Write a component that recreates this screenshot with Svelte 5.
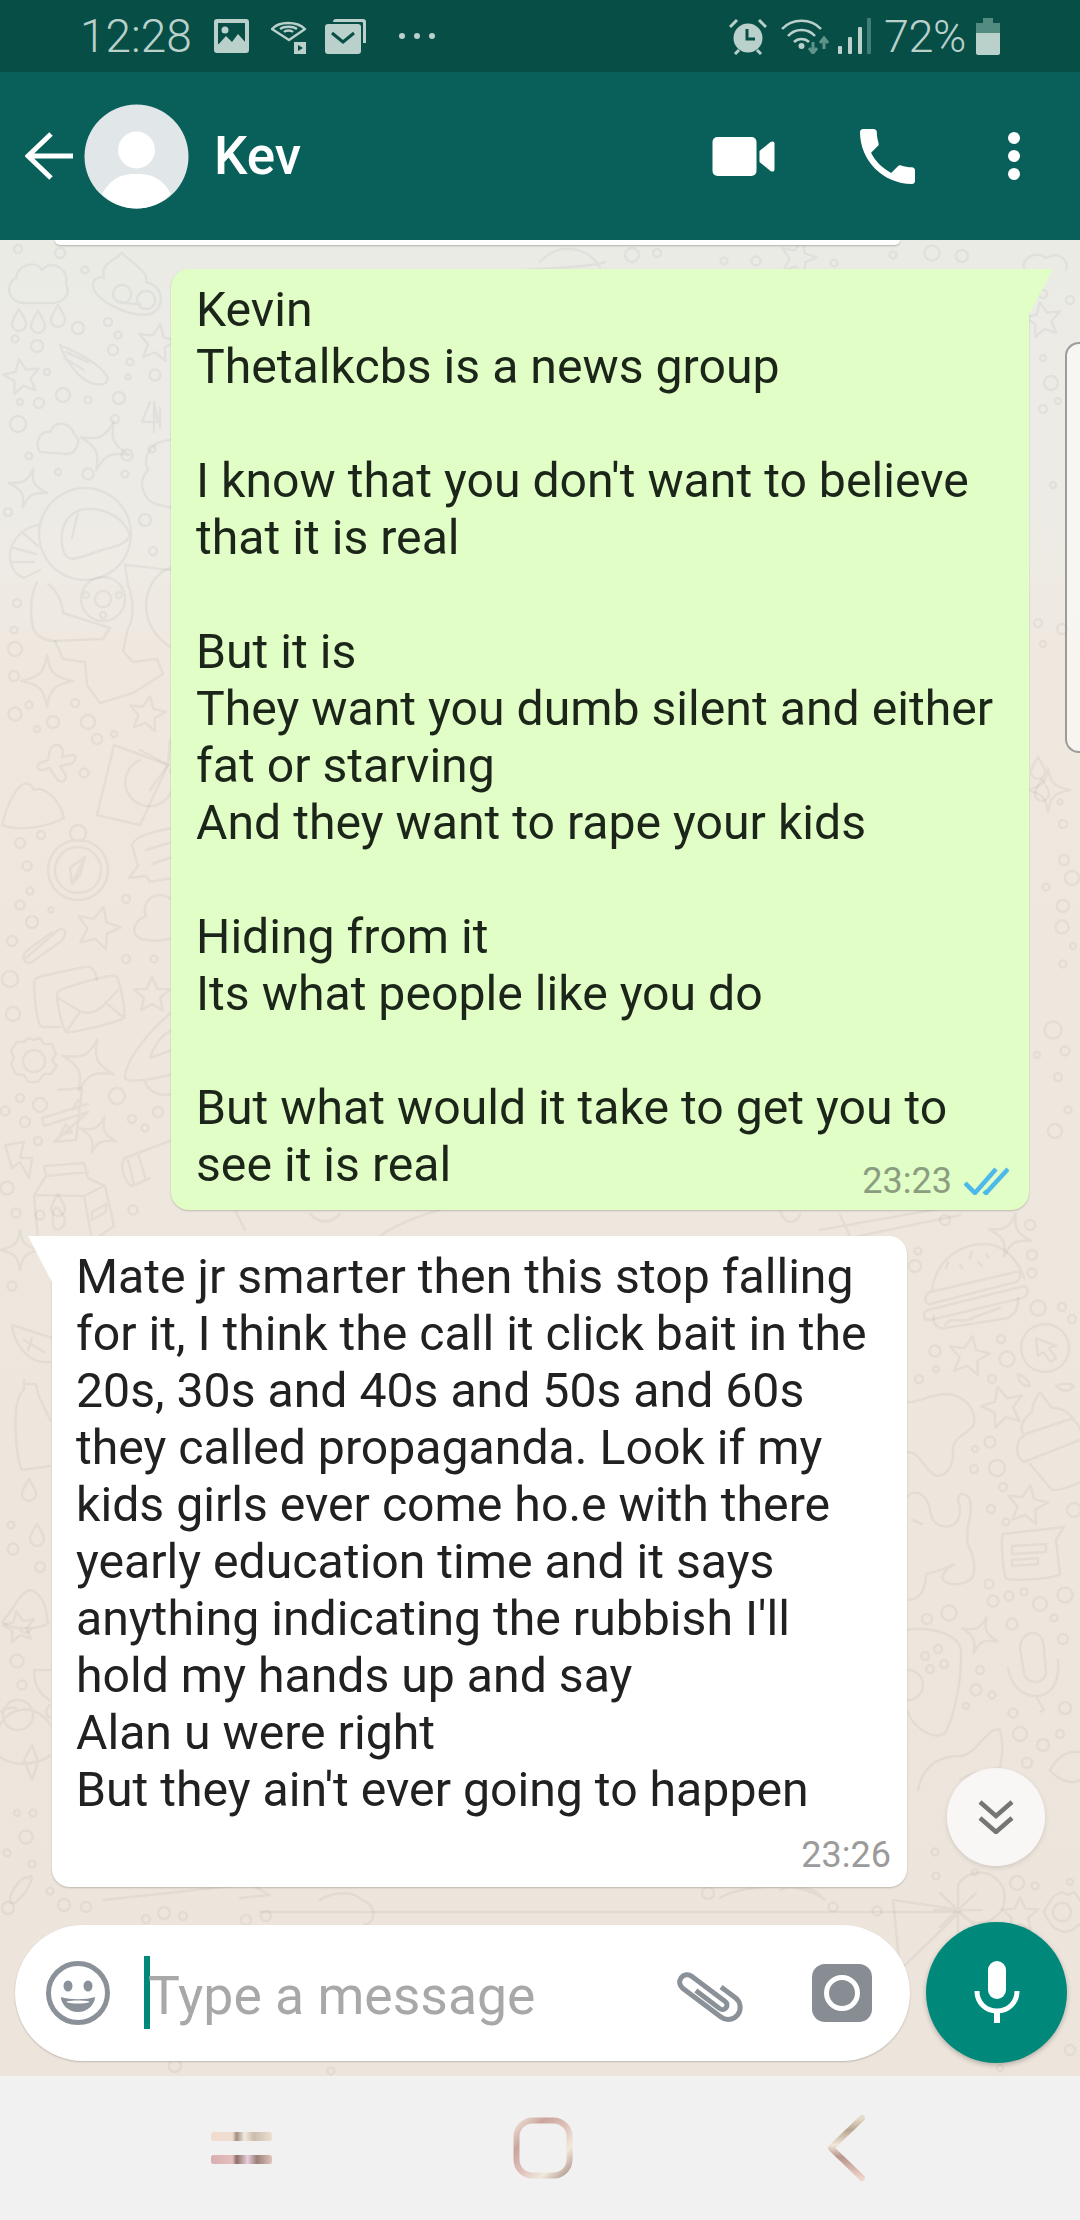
<script>
  const sent = `Kevin
Thetalkcbs is a news group

I know that you don't want to believe
that it is real

But it is
They want you dumb silent and either
fat or starving
And they want to rape your kids

Hiding from it
Its what people like you do

But what would it take to get you to
see it is real`;

  const received = `Mate jr smarter then this stop falling
for it, I think the call it click bait in the
20s, 30s and 40s and 50s and 60s
they called propaganda. Look if my
kids girls ever come ho.e with there
yearly education time and it says
anything indicating the rubbish I'll
hold my hands up and say
Alan u were right
But they ain't ever going to happen`;

  // wallpaper doodles, in page coordinates
  const dots = [
    [20,843,5],[41,835,4],[27,866,4.5],[30,891,3.5],[20,905,4.5],[51,910,2.5],[32,922,6],[12,941,5],[10,979,8],[13,1014,7],
    [126,899,4],[126,959,4],[154,959,3.5],[117,1096,8],[40,1105,7],[20,1098,4],[5,1111,4.5],[25,1122,5],[38,1141,4],[132,1119,4],
    [158,1112,5],[145,1128,3.5],[7,1188,6.5],[16,1213,4.5],[133,1210,4.5],
    [18,249,4],[60,253,5],[85,270,3.5],[78,328,6],[108,322,4],[15,339,3.5],[37,346,6],[47,372,3],[118,335,3.5],[113,350,5],
    [130,362,3.5],[128,377,2.5],[155,375,5.5],[63,395,7],[39,403,5],[20,402,3],[88,400,3.5],[119,398,6],[115,419,4],[18,424,8],
    [127,455,5.5],[152,449,3.5],[29,456,3.5],[58,472,3],[88,474,5.5],[125,474,3.5],[8,512,4],[145,520,6],[153,551,4],[17,603,4],
    [14,630,3.5],[15,649,7],[14,676,5],[29,705,3.5],[15,714,6.5],[37,729,3],[53,722,6],[75,703,4],[88,722,7],[97,739,5],[114,734,3],[84,773,4.5],
    [918,1251,3.5],[915,1266,6],[1032,1255,5],[1032,1273,4.5],[1038,1308,7.5],[1062,1307,4],[1072,1319,4],[1001,1339,4],[935,1351,5.5],
    [1007,1359,7.5],[936,1369,3],[919,1379,4],[992,1379,4],[990,1442,5.5],[975,1449,3],[974,1469,4],[997,1468,8],[1003,1487,4],
    [991,1509,4],[1006,1522,3.5],[1074,1510,7],[989,1584,4.5],[993,1601,5.5],[1009,1596,4.5],[1024,1592,3.5],[1040,1604,7],[1065,1595,7.5],
    [1054,1618,3.5],[1012,1624,5.5],[1063,1639,5],[949,1613,7.5],[927,1619,5],[980,1670,4],[976,1690,5.5],[992,1695,3.5],[966,1706,3],
    [1013,1713,4.5],[1020,1734,7],[1065,1708,6],[1060,1734,4],[1043,1745,6],[1027,1763,5],
    [1070,300,4],[1043,294,4],[1043,358,3],[1051,383,7],[1043,409,4],[1058,401,3],[1053,485,3],[1038,623,4],[1043,644,3],[1062,629,5],
    [1060,802,2.5],[1063,824,4],[1064,860,5],[1072,878,7],[1046,887,3.5],[1063,906,6],[1062,927,6.5],[1073,946,3],[1063,964,3.5],
    [1053,1030,8.5],[1065,1051,4.5],[1037,1055,3],[1058,1077,4],[1068,1110,3.5],[1055,1131,7],
    [12,1286,4.5],[11,1525,3.5],[13,1549,5.5],[17,1661,6.5],[22,1685,4.5],[17,1813,3],[33,1813,3.5],[26,1837,6.5],[7,1853,3.5],[32,1864,3.5],
    [50,1891,3.5],[8,1908,6],[64,1905,6],[86,1907,5],[146,1919,4],[164,1913,6],[183,1916,4],[266,1916,5],[246,1920,5],
    [708,1893,6],[833,1907,4.5],[877,1911,4.5],[935,1852,3.5],[936,1876,3.5],[975,1872,3],[1017,1883,7],[1035,1886,3.5],[1070,1882,3],
    [632,255,7],[657,253,4],[724,261,3.5],[756,261,4.5],[834,263,3.5],[893,255,3.5],[932,253,7.5],[962,256,6],
    [331,2071,3.5],[175,2066,6],[1000,2068,3],[1070,2050,5],[1045,2000,5],[1030,1225,5],[945,1220,5],[40,1215,4.5]
  ];
  const stars = [
    [22,377,18,-10],[157,343,19,10],[147,714,18,10],[98,928,22,15],[152,995,18,0],[969,1356,20,10],[1003,1407,21,-15],
    [1027,1505,20,10],[1043,320,18,-10],[798,258,18,15],[1020,1915,18,0],[19,1627,16,-10]
  ];
  const sparkles = [
    [105,446,26,20],[28,488,20,15],[47,681,26,0],[88,1065,27,20],[98,1135,19,20],[980,1635,19,20],[1048,790,22,0],
    [20,1250,20,0],[1010,1235,22,15]
  ];
  const drops = [[19,320],[38,322],[58,316],[58,1205],[29,1490],[37,1535],[1038,768],[1042,790]];
  const doodles = [
    // cloud, comet
    "M24 303C8 303 4 284 16 278C18 264 36 260 42 270C52 258 70 270 66 284C72 296 62 303 52 303Z",
    "M60 345C74 352 100 362 108 378C106 388 92 386 80 376C72 368 64 358 60 345ZM66 352 88 362M64 358 84 370",
    // poo
    "M122 253C130 262 150 272 146 282C164 286 166 308 150 314C130 318 100 302 94 290C90 278 100 276 104 278C100 264 112 262 122 253Z",
    "M122 285A9 9 0 1 0 122.1 285ZM146 291A9 9 0 1 0 146.1 291ZM116 300C122 304 134 304 140 304",
    // four
    "M150 402 142 422H158L154 402V432M160 408V428",
    "M40 452C34 444 40 430 50 432C56 418 72 424 74 434C82 438 78 454 66 454Z",
    "M172 440C150 440 142 458 148 470C136 482 144 500 156 504L172 508",
    // astronaut: helmet and visor
    "M85 488A46 46 0 1 0 85.1 488ZM63 528C68 514 78 509 87 509C105 508 125 518 130 536C124 546 112 547 110 548C98 550 84 558 72 559C62 558 60 540 63 528ZM78 514C76 520 74 530 72 538",
    // backpack
    "M38 525C20 528 8 545 10 560C12 570 18 576 24 578L40 570M24 534 38 546M14 548 36 554M12 562 34 562",
    // torso, arm and legs
    "M37 582C30 596 30 615 33 628C36 636 44 640 53 641L103 639 110 628 63 613C62 600 56 590 48 584",
    "M55 641 63 659 85 662 87 685 100 703 133 693 163 674 157 659 133 662 123 651 128 628C134 620 134 600 128 585L125 565C140 566 165 570 172 570",
    "M103 577A22 22 0 1 0 103.1 577ZM103 591A8 8 0 1 0 103.1 591ZM86 592A3 3 0 1 0 86.1 592ZM119 592A3 3 0 1 0 119.1 592ZM103 612A3 3 0 1 0 103.1 612Z",
    "M172 568C156 570 146 590 146 606C146 624 158 640 172 648",
    // cross, mountain, glass
    "M57 745C62 745 64 750 62 757L72 755C78 755 76 762 70 764L60 766 66 776C66 782 60 784 56 778L50 768 42 770C36 770 36 764 42 762L48 760 50 750C52 746 54 745 57 745Z",
    "M2 825C8 800 24 770 34 790C44 785 60 800 64 818C50 826 20 832 2 825Z",
    "M114 745 168 765 140 825 97 815Z",
    "M140 760A24 24 0 1 0 170 770M168 765 140 750M168 765 150 790M168 765 170 740",
    // compass
    "M78 840A30 30 0 1 0 78.1 840ZM78 847A23 23 0 1 0 78.1 847ZM78 825A8 8 0 1 0 78.1 825ZM85 857 72 884 70 868ZM85 857 80 875 72 884",
    // chat, cloud
    "M132 845C134 838 150 832 172 828M132 845 138 866 129 878 146 876 150 882 172 878M146 850 172 842M152 864 172 857",
    "M172 900C155 886 140 904 146 916C130 922 130 940 148 940C155 942 165 940 172 938",
    // paperclip
    "M26 958 58 930C66 926 68 936 60 942L32 962C24 966 20 956 28 950L52 932",
    // envelopes
    "M60 1027 44 1027C40 1028 36 1022 34 985C34 978 36 978 42 976L84 967C92 966 95 970 97 980",
    "M58 992C55 996 62 1028 66 1032C68 1034 120 1022 124 1018C126 1012 120 980 116 976C110 974 60 988 58 992ZM58 998 78 1010C88 1016 96 1012 104 1005L118 990M66 1032 80 1012M124 1018 105 1002",
    // gear
    "M34 1040 40 1038 44 1044 52 1044 56 1054 52 1060 57 1066 51 1074 44 1074 38 1082 28 1082 24 1075 16 1074 11 1064 14 1058 11 1050 17 1042 24 1042 28 1038ZM34 1050A11 11 0 1 0 34.1 1050Z",
    // rocket-ish on the bubble's edge
    "M172 1012C150 1030 125 1060 125 1078C127 1084 160 1078 172 1074M172 1030C160 1035 152 1050 150 1058L172 1050M145 1082C150 1094 162 1096 172 1094",
    // bluetooth-like
    "M58 1090 82 1088 76 1140 54 1142 88 1112 44 1126 42 1118 88 1104M78 1100 72 1110 82 1105ZM66 1124 60 1135 72 1132Z",
    // lightning
    "M5 1145 24 1142 20 1158 32 1158 29 1178 20 1162 12 1168Z",
    // milk carton
    "M44 1166 84 1163 88 1178 105 1186 114 1226 94 1240M44 1166 46 1176 34 1195 38 1240M46 1176 88 1172M34 1195 84 1196 104 1186M84 1196 92 1240M92 1212 106 1204 106 1212 92 1220ZM55 1208C52 1212 52 1226 55 1229C60 1231 65 1226 65 1220C65 1216 60 1212 58 1208Z",
    // cylinder
    "M172 1140 125 1158C118 1165 126 1184 132 1186L150 1178M138 1154 146 1180M128 1160 134 1184",
    // left margin, beside the white bubble
    "M12 1325 52 1338M12 1325C14 1345 30 1365 50 1362M24 1340 44 1352M32 1338 28 1350",
    "M24 1380V1390C10 1400 16 1460 22 1470L50 1466M24 1384 36 1384 38 1394 50 1420",
    "M32 1590C20 1590 14 1610 2 1622C12 1630 34 1630 48 1624C46 1610 46 1598 32 1590ZM20 1630C24 1634 28 1634 32 1628M40 1562A5 5 0 1 0 40.1 1562",
    "M50 1670H34C34 1685 40 1695 50 1700M50 1705C44 1710 46 1716 50 1718",
    "M18 1700A15 15 0 1 0 18.1 1700ZM16 1708C-6 1706-14 1730-6 1750C6 1770 40 1765 50 1755M-2 1730A28 28 0 0 1 50 1725M32 1745 24 1760 32 1780 38 1762Z",
    "M18 1900C30 1890 36 1870 28 1878C22 1875 14 1888 10 1896C10 1905 14 1905 18 1900Z",
    // burger
    "M932 1290C936 1260 960 1244 984 1244C1004 1244 1018 1260 1024 1278M930 1292 1016 1272C1022 1270 1022 1278 1016 1282L930 1304C924 1306 924 1294 930 1292ZM928 1310 1024 1286C1030 1288 1028 1296 1022 1298L930 1320C922 1320 922 1312 928 1310Z",
    "M934 1316C932 1325 940 1330 945 1328L1008 1318C1018 1312 1018 1305 1018 1298M948 1262 946 1268M960 1264 962 1268M972 1252 970 1258M978 1262 982 1266M986 1254 988 1258",
    "M945 1325C950 1316 960 1322 968 1320C976 1316 988 1312 1000 1308",
    // cursor
    "M1045 1324A24 24 0 1 0 1045.1 1324ZM1036 1338 1038 1356 1043 1352 1051 1362 1056 1358 1049 1348 1056 1346Z",
    // cupcake
    "M1040 1392 1052 1408C1064 1408 1072 1415 1074 1421C1080 1425 1080 1428 1080 1430M1040 1392C1034 1400 1032 1408 1032 1412C1024 1418 1018 1426 1024 1436C1016 1440 1014 1456 1024 1462L1080 1440M1030 1464 1052 1490C1062 1490 1072 1486 1080 1482M1025 1434 1074 1418",
    "M1056 1386C1062 1382 1072 1384 1074 1386C1070 1392 1062 1392 1056 1386ZM1018 1374C1024 1376 1030 1382 1030 1386C1022 1386 1018 1382 1018 1374Z",
    // blob and dog
    "M908 1402C916 1404 928 1394 948 1394C966 1396 976 1410 974 1424C970 1434 952 1436 953 1450C954 1470 944 1476 936 1476C924 1470 920 1452 908 1452",
    "M908 1496C912 1490 926 1490 930 1510C932 1524 940 1528 950 1526C960 1524 962 1510 958 1500C958 1492 966 1492 970 1500C974 1512 964 1530 968 1545C976 1560 976 1575 970 1580C960 1586 946 1586 942 1578C946 1566 954 1566 954 1564C946 1568 936 1572 926 1574C926 1586 922 1600 908 1600M912 1520 922 1524",
    // chat, mic
    "M1003 1534 1064 1527 1056 1540 1060 1574C1060 1578 1010 1582 1006 1578C1004 1576 1000 1540 1003 1534ZM1012 1546 1046 1544 1046 1552 1012 1554ZM1012 1560 1038 1558 1038 1564 1012 1566Z",
    "M1032 1633C1040 1633 1044 1640 1044 1650L1046 1672C1046 1684 1028 1686 1024 1674L1020 1648C1020 1640 1026 1633 1032 1633ZM1008 1668C1012 1690 1026 1696 1036 1696C1050 1696 1060 1684 1058 1660M1036 1696 1044 1710 1040 1712",
    // controller and lower blob
    "M908 1630C930 1626 958 1634 961 1650C962 1680 954 1720 944 1734C932 1740 912 1726 908 1712M908 1670A15 15 0 1 1 908 1700M925 1652A4 4 0 1 0 925.1 1652ZM938 1645A4 4 0 1 0 938.1 1645ZM930 1665A4 4 0 1 0 930.1 1665ZM944 1660A4 4 0 1 0 944.1 1660Z",
    "M918 1790C924 1760 946 1756 960 1756C976 1756 988 1725 1000 1730C1004 1744 1002 1756 1000 1768C984 1772 970 1772 960 1780",
    "M1080 1752C1064 1750 1056 1760 1050 1770C1056 1778 1070 1786 1080 1780",
    // bottom band under the white bubble
    "M540 1912H960M260 1912H540",
    "M893 1900 962 1910 900 1970ZM958 1910A25 25 0 1 0 958.1 1885ZM958 1888V1934M934 1910H982M940 1893 976 1927M976 1893 940 1927",
    "M1062 1892 1068 1895 1074 1892 1080 1900M1062 1892 1054 1896 1048 1904 1044 1912 1048 1920 1054 1928 1064 1932 1072 1930 1080 1924M1062 1903A9 9 0 1 0 1062.1 1903Z",
    "M104 1900 250 1884 270 1895 240 1898M320 1900C335 1890 355 1892 362 1900C378 1905 376 1925 364 1924",
    "M780 1890C790 1885 810 1885 820 1895M720 1898C740 1885 800 1880 825 1900",
    // y 1210 to 1236 band
    "M840 1215 850 1236M780 1210C784 1225 796 1225 800 1214M820 1230 960 1205M840 1240 960 1215",
    "M245 1230 235 1210M310 1214C320 1224 330 1224 340 1214M380 1236C395 1225 420 1215 440 1210",
    // planet near the top
    "M540 262C560 240 590 248 600 268M525 270C540 268 590 268 605 262",
    "M1024 268C1020 258 1038 250 1046 258C1060 250 1070 262 1066 270"
  ];
</script>

<div class="phone">
  <div class="status">
    <span class="clock">12:28</span>
    <svg class="st-pic" width="35" height="34" viewBox="0 0 35 34">
      <rect width="35" height="34" rx="3" fill="#b9d0cb" />
      <rect x="4" y="4" width="27" height="21" fill="#074e46" />
      <circle cx="11" cy="11" r="3.5" fill="#b9d0cb" />
      <path d="M3 27 12 17 18 23 24 15 32 24V30H3Z" fill="#b9d0cb" />
    </svg>
    <svg class="st-cast" width="36" height="36" viewBox="0 0 36 36" fill="none" stroke="#b9d0cb" stroke-width="2.4">
      <path d="M1 11C8 3 26 3 34 11L18 22Z" stroke-linejoin="round" />
      <path d="M9 11C13 8 22 8 26 11M13 14C15 12 20 12 22 14" />
      <rect x="23" y="24" width="12" height="12" fill="#b9d0cb" stroke="none" />
      <path d="M27 27V33L32 30Z" fill="#074e46" stroke="none" />
    </svg>
    <svg class="st-mail" width="41" height="35" viewBox="0 0 41 35">
      <path d="M8 3C8 1 9 0 11 0H38C40 0 41 1 41 3V24H38V4C38 3 37 3 36 3Z" fill="#b9d0cb" />
      <rect y="5" width="36" height="30" rx="3" fill="#b9d0cb" />
      <path d="M7 14 18 23 29 14" fill="none" stroke="#074e46" stroke-width="3" />
    </svg>
    <svg class="st-more" width="37" height="8" viewBox="0 0 37 8" fill="#b9d0cb">
      <circle cx="3" cy="4" r="3" /><circle cx="18" cy="4" r="3" /><circle cx="33" cy="4" r="3" />
    </svg>

    <svg class="st-alarm" width="38" height="37" viewBox="0 0 38 37" fill="#b9d0cb">
      <circle cx="19" cy="20" r="14.5" />
      <path d="M1 9 8 2M37 9 30 2M6 36 10 32M32 36 28 32" stroke="#b9d0cb" stroke-width="3" />
      <path d="M18 11V21H26" fill="none" stroke="#074e46" stroke-width="3" />
    </svg>
    <svg class="st-wifi" width="48" height="36" viewBox="0 0 48 36" fill="none" stroke="#b9d0cb" stroke-width="2.6">
      <path d="M1 11C11 0 30 0 40 11M7 18C14 10 27 10 34 18M13 24C17 20 24 20 28 24" />
      <circle cx="20.500" cy="28" r="3" fill="#b9d0cb" stroke="none" />
      <path d="M32 24V35M28 30 32 35 36 30" stroke="#5f9488" stroke-width="3" />
      <path d="M43 31V20M39 25 43 20 47 25" stroke="#5f9488" stroke-width="3" />
    </svg>
    <svg class="st-signal" width="33" height="36" viewBox="0 0 33 36" fill="#b9d0cb">
      <rect x="0" y="28" width="4" height="8" rx="1" />
      <rect x="10" y="19" width="4" height="17" rx="1" />
      <rect x="20" y="9" width="4" height="27" rx="1" />
      <rect x="29" y="0" width="4" height="36" rx="1" fill="#3f7f74" />
    </svg>
    <span class="pct">72%</span>
    <svg class="st-batt" width="24" height="37" viewBox="0 0 24 37">
      <path d="M7 0H17V5H24V15H0V5H7Z" fill="#548b80" />
      <path d="M0 15H24V35C24 36 23 37 22 37H2C1 37 0 36 0 35Z" fill="#b9d0cb" />
    </svg>
  </div>

  <header>
    <svg class="back" width="48" height="48" viewBox="0 0 48 48" fill="none" stroke="#fff" stroke-width="5">
      <path d="M48 24H4M26 2 3 24 26 46" />
    </svg>
    <div class="avatar">
      <svg width="105" height="105" viewBox="0 0 105 105">
        <circle cx="52.500" cy="52.500" r="52" fill="#e1e6e8" />
        <circle cx="52.500" cy="46" r="18.500" fill="#fff" />
        <path d="M18 90C28 72 40 70 52.500 70S77 72 87 90C78 100 64 104.500 52.500 104.500S27 100 18 90Z" fill="#fff" />
      </svg>
    </div>
    <span class="name">Kev</span>
    <svg class="h-video" width="63" height="39" viewBox="0 0 62 39" fill="#fff">
      <rect width="44" height="39" rx="5" />
      <path d="M47 14 58 5C60 4 62 4 62 7V32C62 35 60 35 58 34L47 25Z" />
    </svg>
    <svg class="h-call" width="55" height="55" viewBox="3 3 18 18" fill="#fff">
      <path d="M6.620 10.790c1.440 2.830 3.760 5.140 6.590 6.590l2.200-2.200c.27-.27.67-.36 1.020-.24 1.120.37 2.330.57 3.570.57.55 0 1 .45 1 1V20c0 .55-.45 1-1 1-9.390 0-17-7.610-17-17 0-.55.45-1 1-1h3.500c.55 0 1 .45 1 1 0 1.250.2 2.450.57 3.570.11.35.03.74-.25 1.020l-2.200 2.200z" />
    </svg>
    <svg class="h-dots" width="12" height="48" viewBox="0 0 12 48" fill="#fff">
      <circle cx="6" cy="6" r="6" /><circle cx="6" cy="24" r="6" /><circle cx="6" cy="42" r="6" />
    </svg>
  </header>

  <main class="chat">
    <svg class="wallpaper" width="1080" height="1836" viewBox="0 240 1080 1836" fill="none" stroke="#000" stroke-opacity=".045" stroke-width="2.500" stroke-linejoin="round" stroke-linecap="round">
      {#each doodles as d}<path {d} />{/each}
      {#each dots as [cx, cy, r]}<circle {cx} {cy} {r} />{/each}
      {#each stars as [x, y, s, a]}
        <path transform="translate({x} {y}) rotate({a}) scale({s / 20})" vector-effect="non-scaling-stroke" d="M0-20 6-7 20-6 9 3 12 17 0 10-12 17-9 3-20-6-6-7Z" />
      {/each}
      {#each sparkles as [x, y, s, a]}
        <path transform="translate({x} {y}) rotate({a}) scale({s / 20})" vector-effect="non-scaling-stroke" d="M0-20C2-7 5-3 20 0 5 3 2 7 0 20-2 7-5 3-20 0-5-3-2-7 0-20Z" />
      {/each}
      {#each drops as [x, y]}
        <path transform="translate({x} {y})" d="M0-11C5-3 7 0 7 4A7 7 0 0 1-7 4C-7 0-5-3 0-11Z" />
      {/each}
    </svg>

    <div class="sliver"></div>

    <div class="bubble out">
      <p>{sent}</p>
      <div class="meta">
        <span>23:23</span>
        <svg width="45" height="28" viewBox="0 0 45 28" fill="none" stroke="#4db8ea" stroke-width="4.500">
          <path d="M1 16 11 26 32 2M20 24 22 26 44 2" />
        </svg>
      </div>
    </div>

    <div class="bubble in">
      <p>{received}</p>
      <div class="meta"><span>23:26</span></div>
    </div>

    <button class="down" aria-label="Scroll to bottom">
      <svg width="36" height="34" viewBox="0 0 36 34" fill="none" stroke="#757572" stroke-width="4.500">
        <path d="M2 2 18 16 34 2M2 18 18 32 34 18" />
      </svg>
    </button>
    <div class="edge"></div>

    <div class="compose">
      <div class="input">
        <svg class="i-emoji" width="64" height="64" viewBox="0 0 64 64">
          <circle cx="32" cy="32" r="29.500" fill="none" stroke="#8a9198" stroke-width="5" />
          <ellipse cx="22" cy="25" rx="4.500" ry="5.500" fill="#8a9198" />
          <ellipse cx="42" cy="25" rx="4.500" ry="5.500" fill="#8a9198" />
          <path d="M15 36C24 39 40 39 49 36 49 43 42 51 32 51S15 43 15 36ZM20 41C27 43 37 43 44 41 41 39 23 39 20 41Z" fill="#8a9198" fill-rule="evenodd" />
        </svg>
        <span class="placeholder">Type a message</span>
        <svg class="i-clip" width="62" height="56" viewBox="0 0 62 56" fill="none" stroke="#8a9198" stroke-width="5">
          <path transform="translate(31 28) rotate(37)" d="M6-12H24A12 12 0 0 1 24 12H-24A7.500 7.500 0 0 1-24-3H18A4.500 4.500 0 0 1 18 6H-12" />
        </svg>
        <svg class="i-cam" width="60" height="58" viewBox="0 0 60 58">
          <rect width="60" height="58" rx="13" fill="#888d94" />
          <circle cx="30" cy="29" r="15.500" fill="none" stroke="#fff" stroke-width="5" />
        </svg>
      </div>
      <button class="mic" aria-label="Record">
        <svg width="46" height="64" viewBox="0 0 46 64">
          <rect x="14" width="18" height="38" rx="9" fill="#fff" />
          <path d="M3 30C3 42 12 50 23 50S43 42 43 30" fill="none" stroke="#fff" stroke-width="5" />
          <path d="M23 48V62" stroke="#fff" stroke-width="6" />
        </svg>
      </button>
    </div>
  </main>

  <nav>
    <svg class="n-recent" width="61" height="32" viewBox="0 0 61 32">
      <defs>
        <linearGradient id="rose1">
          <stop offset="0" stop-color="#f1dccf" /><stop offset=".35" stop-color="#f0ddd0" /><stop offset=".42" stop-color="#a48e84" />
          <stop offset=".55" stop-color="#f0ebe0" /><stop offset=".7" stop-color="#ccbcac" /><stop offset="1" stop-color="#ece0d2" />
        </linearGradient>
        <linearGradient id="rose2">
          <stop offset="0" stop-color="#d9adb0" /><stop offset=".35" stop-color="#e4bfc0" /><stop offset=".42" stop-color="#8e7068" />
          <stop offset=".6" stop-color="#e8cfdc" /><stop offset=".75" stop-color="#9a8078" /><stop offset="1" stop-color="#e0c4bc" />
        </linearGradient>
      </defs>
      <rect width="61" height="9" rx="2.500" fill="url(#rose1)" />
      <rect y="23" width="61" height="9" rx="2.500" fill="url(#rose2)" />
    </svg>
    <svg class="n-home" width="60" height="62" viewBox="0 0 60 62">
      <defs>
        <linearGradient id="rose3" x1="0" y1="0" x2="1" y2="1">
          <stop offset="0" stop-color="#efe0d4" /><stop offset=".25" stop-color="#c9a59c" /><stop offset=".5" stop-color="#dfc0b8" />
          <stop offset=".75" stop-color="#f0e8dc" /><stop offset="1" stop-color="#b09488" />
        </linearGradient>
      </defs>
      <rect x="3.500" y="3.500" width="53" height="55" rx="16" fill="none" stroke="url(#rose3)" stroke-width="6" />
    </svg>
    <svg class="n-back" width="38" height="66" viewBox="0 0 38 66">
      <defs>
        <linearGradient id="rose4" x1="0" y1="0" x2="0" y2="1">
          <stop offset="0" stop-color="#e6dccb" /><stop offset=".2" stop-color="#b8a58f" /><stop offset=".45" stop-color="#f1e6d8" />
          <stop offset=".65" stop-color="#b9948c" /><stop offset="1" stop-color="#efd4c8" />
        </linearGradient>
      </defs>
      <path d="M35 3 4 33 35 63" fill="none" stroke="url(#rose4)" stroke-width="6" stroke-linecap="round" stroke-linejoin="round" />
    </svg>
  </nav>
</div>

<style>
  :global(body) {
    margin: 0;
  }

  .phone {
    width: 1080px;
    height: 2220px;
    display: flex;
    flex-direction: column;
    overflow: hidden;
    font-family: Roboto, "Noto Sans", sans-serif;
  }

  /* status bar */
  .status {
    flex: none;
    height: 72px;
    box-sizing: border-box;
    padding: 0 80px 0 80px;
    display: flex;
    align-items: center;
    background: #074e46;
    color: #b9d0cb;
  }

  .clock {
    font-size: 46px;
    font-weight: 300;
    width: 134px;
  }

  .st-cast {
    margin-left: 22px;
  }

  .st-mail {
    margin-left: 18px;
  }

  .st-more {
    margin-left: 33px;
  }

  .st-alarm {
    margin-left: auto;
  }

  .st-wifi {
    margin-left: 14px;
  }

  .st-signal {
    margin-left: 9px;
  }

  .pct {
    margin-left: 13px;
    width: 92px;
    font-size: 45px;
    font-weight: 300;
    letter-spacing: -0.5px;
  }

  /* header */
  header {
    flex: none;
    height: 168px;
    box-sizing: border-box;
    padding: 0 60px 0 25px;
    display: flex;
    align-items: center;
    background: #09605a;
    color: #fff;
  }

  .avatar {
    width: 105px;
    height: 105px;
    margin-left: 11px;
  }

  .avatar svg {
    display: block;
  }

  .name {
    margin-left: 25px;
    font-size: 53px;
    font-weight: 500;
  }

  .h-video {
    margin-left: auto;
  }

  .h-call {
    margin-left: 85px;
  }

  .h-dots {
    margin-left: 93px;
  }

  /* chat */
  .chat {
    position: relative;
    flex: 1;
    min-height: 0;
    display: flex;
    flex-direction: column;
    background: linear-gradient(#ebebe6 0, #eeebe5 320px, #efe8df 420px, #ede5dc 100%);
  }

  .wallpaper {
    position: absolute;
    top: 0;
    left: 0;
  }

  .sliver {
    position: relative;
    height: 5px;
    margin: 0 180px 0 55px;
    background: #fff;
    border-radius: 0 0 14px 14px;
    box-shadow: 0 1px 2px rgba(0, 0, 0, 0.25);
  }

  .bubble {
    position: relative;
    box-sizing: border-box;
    box-shadow: 0 1px 2px rgba(0, 0, 0, 0.2);
  }

  .bubble p {
    margin: 0;
    font-size: 48.200px;
    line-height: 57px;
    white-space: pre;
  }

  .bubble::before {
    content: "";
    position: absolute;
    top: 0;
    width: 24px;
    height: 46px;
  }

  .out {
    width: 858px;
    margin: 24px 0 0 171px;
    padding: 12px 26px 0 25px;
    height: 941px;
    background: #e1fec6;
    color: #1c2519;
    border-radius: 18px 0 18px 18px;
  }

  .out::before {
    left: 100%;
    background: #e1fec6;
    clip-path: polygon(0 0, 100% 0, 0 100%);
  }

  .in {
    width: 855px;
    margin: 26px 0 0 52px;
    padding: 12px 24px 0;
    height: 651px;
    background: #fff;
    color: #212121;
    border-radius: 0 18px 18px 18px;
  }

  .in::before {
    right: 100%;
    background: #fff;
    clip-path: polygon(0 0, 100% 0, 100% 100%);
  }

  .meta {
    display: flex;
    justify-content: flex-end;
    align-items: center;
    gap: 12px;
    font-size: 36px;
    line-height: 40px;
  }

  .out .meta {
    margin: -32px -6px 0 0;
    color: #8b9d80;
  }

  .in .meta {
    margin: 17px -8px 0 0;
    color: #9b9b9b;
  }

  .down {
    position: absolute;
    left: 947px;
    top: 1528px;
    width: 98px;
    height: 98px;
    padding: 0;
    border: 0;
    border-radius: 50%;
    background: rgba(249, 248, 247, 0.94);
    box-shadow: 0 2px 5px rgba(0, 0, 0, 0.12);
    display: flex;
    align-items: center;
    justify-content: center;
  }

  /* samsung edge panel handle */
  .edge {
    position: absolute;
    left: 1065px;
    top: 102px;
    width: 15px;
    height: 411px;
    box-sizing: border-box;
    border: 2px solid #9c9c9a;
    border-right: 0;
    border-radius: 14px 0 0 14px;
    background: rgba(255, 255, 255, 0.55);
  }

  .compose {
    position: relative;
    margin-top: auto;
    padding: 0 13px 13px 15px;
    display: flex;
    align-items: center;
    gap: 16px;
  }

  .input {
    flex: 1;
    height: 136px;
    box-sizing: border-box;
    padding-left: 31px;
    display: flex;
    align-items: center;
    background: #fff;
    border-radius: 68px;
    box-shadow: 0 1px 2px rgba(0, 0, 0, 0.2);
  }

  .placeholder {
    margin: 0 auto 0 34px;
    padding-top: 6px;
    border-left: 6px solid #00897b;
    text-indent: -2px;
    font-size: 53.500px;
    line-height: 67px;
    color: #a8a8a8;
  }

  .i-clip {
    overflow: visible;
  }

  .i-cam {
    margin: 0 38px 0 72px;
  }

  .mic {
    width: 141px;
    height: 141px;
    flex: none;
    padding: 0;
    border: 0;
    border-radius: 50%;
    background: #00897b;
    box-shadow: 0 2px 5px rgba(0, 0, 0, 0.25);
    display: flex;
    align-items: center;
    justify-content: center;
  }

  /* navigation bar */
  nav {
    flex: none;
    height: 144px;
    box-sizing: border-box;
    padding-left: 211px;
    display: flex;
    align-items: center;
    background: #f1f1f1;
  }

  .n-home {
    margin-left: 241px;
  }

  .n-back {
    margin-left: 254px;
  }
</style>
